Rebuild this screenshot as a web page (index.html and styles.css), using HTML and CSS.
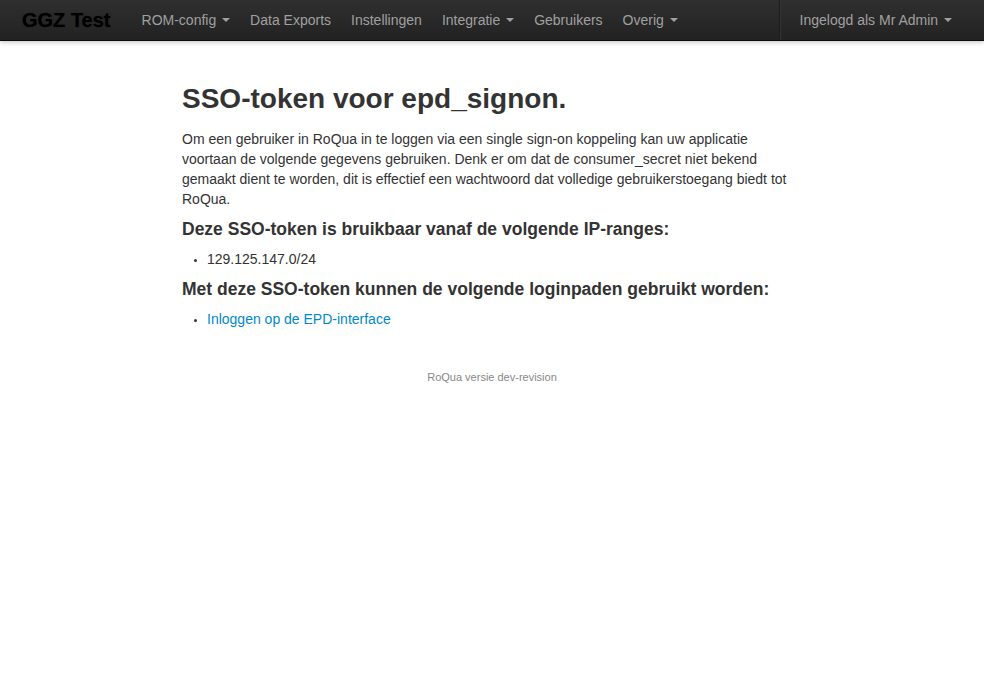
FILE: index.html
```html
<!DOCTYPE html>
<html lang="nl">
<head>
<meta charset="utf-8">
<title>SSO-token voor epd_signon.</title>
<link rel="stylesheet" href="styles.css">
</head>
<body>
<div class="navbar">
  <div class="container nav-row">
    <a class="brand" href="#">GGZ Test</a>
    <ul class="nav">
      <li><a href="#">ROM-config <b class="caret"></b></a></li>
      <li><a href="#">Data Exports</a></li>
      <li><a href="#">Instellingen</a></li>
      <li><a href="#">Integratie <b class="caret"></b></a></li>
      <li><a href="#">Gebruikers</a></li>
      <li><a href="#">Overig <b class="caret"></b></a></li>
    </ul>
    <ul class="nav nav-right">
      <li class="divider-vertical"></li>
      <li><a href="#">Ingelogd als Mr Admin <b class="caret"></b></a></li>
    </ul>
  </div>
</div>

<div class="container">
  <div class="content">
    <h1>SSO-token voor epd_signon.</h1>
    <p>Om een gebruiker in RoQua in te loggen via een single sign-on koppeling kan uw applicatie voortaan de volgende gegevens gebruiken. Denk er om dat de consumer_secret niet bekend gemaakt dient te worden, dit is effectief een wachtwoord dat volledige gebruikerstoegang biedt tot RoQua.</p>
    <h3>Deze SSO-token is bruikbaar vanaf de volgende IP-ranges:</h3>
    <ul class="list">
      <li>129.125.147.0/24</li>
    </ul>
    <h3>Met deze SSO-token kunnen de volgende loginpaden gebruikt worden:</h3>
    <ul class="list">
      <li><a href="#">Inloggen op de EPD-interface</a></li>
    </ul>
  </div>
  <footer class="footer">RoQua versie dev-revision</footer>
</div>
</body>
</html>
```

FILE: styles.css
```css
* { box-sizing: border-box; }

body {
  margin: 0;
  font-family: "Liberation Sans", Arial, Helvetica, sans-serif;
  font-size: 14px;
  line-height: 20px;
  color: #333;
  background: #fff;
}

a { color: #0088cc; text-decoration: none; }

.container {
  width: 940px;
  margin: 0 auto;
}

.navbar {
  height: 41px;
  background: linear-gradient(#2f2f2f, #222);
  border-bottom: 1px solid #0c0c0c;
  box-shadow: 0 1px 5px rgba(0,0,0,0.25);
}

.nav-row {
  display: flex;
  align-items: stretch;
  height: 40px;
}

.brand {
  display: block;
  padding: 10px 21px 10px 0;
  font-size: 20px;
  font-weight: 700;
  line-height: 20px;
  color: #000;
  text-shadow: 0 0 1px rgba(0,0,0,0.6);
}

.nav {
  display: flex;
  list-style: none;
  margin: 0;
  padding: 0;
}

.nav a {
  display: block;
  padding: 10px;
  line-height: 20px;
  color: #a0a0a0;
}

.nav-right {
  margin-left: auto;
}

.divider-vertical {
  width: 2px;
  height: 40px;
  margin: 0 9px;
  border-left: 1px solid #1c1c1c;
  border-right: 1px solid #333;
}

.caret {
  display: inline-block;
  width: 0;
  height: 0;
  margin-left: 2px;
  vertical-align: middle;
  border-top: 4px solid #a0a0a0;
  border-left: 4px solid transparent;
  border-right: 4px solid transparent;
  position: relative;
  top: -1px;
}

.content {
  width: 620px;
  margin-left: 160px;
  padding-top: 28px;
}

h1 {
  margin: 10px 0;
  font-size: 28px;
  line-height: 40px;
  font-weight: bold;
  color: #333;
}

p { margin: 0 0 10px; }

h3 {
  margin: 10px 0;
  font-size: 17.5px;
  line-height: 20px;
  font-weight: bold;
  color: #333;
}

.list {
  margin: 0 0 10px 25px;
  padding: 0;
  list-style: none;
}

.list li::before {
  content: "";
  display: inline-block;
  width: 3px;
  height: 3px;
  margin-left: -13px;
  margin-right: 10px;
  border-radius: 50%;
  background: #333;
  vertical-align: middle;
}

.footer {
  margin-top: 39px;
  text-align: center;
  font-size: 11px;
  line-height: 18px;
  color: #888;
}
```
